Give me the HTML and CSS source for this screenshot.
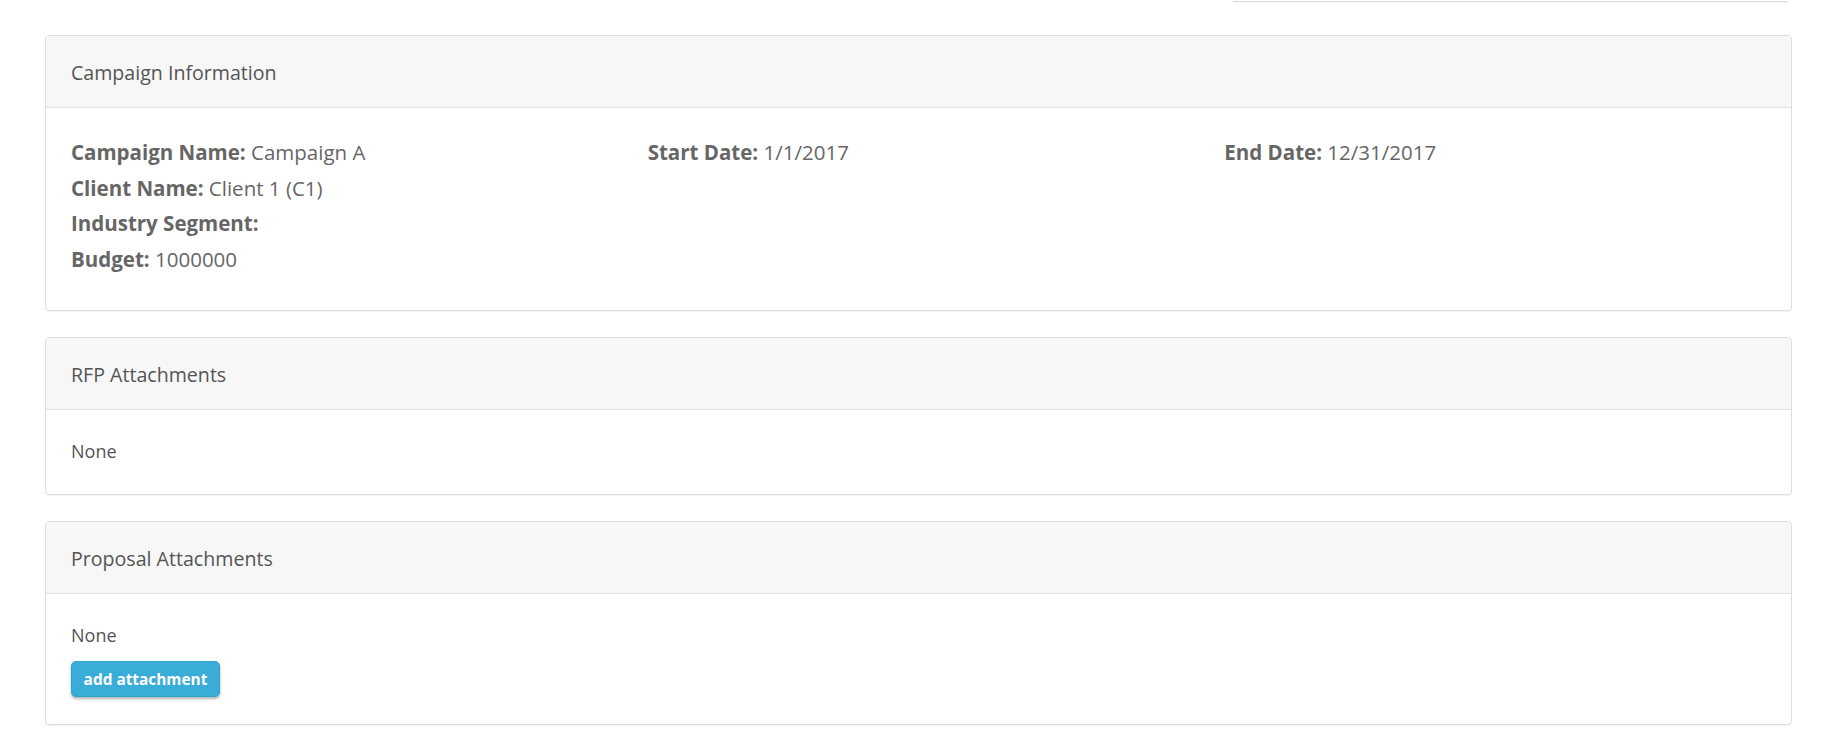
FILE: index.html
```html
<!DOCTYPE html>
<html lang="en">
<head>
<meta charset="utf-8">
<title>Campaign</title>
<link rel="stylesheet" href="styles.css">
</head>
<body>
<div class="page">
  <div class="topbar"><div class="search-stub"></div></div>

  <section class="panel">
    <div class="panel-heading">Campaign Information</div>
    <div class="panel-body info-body">
      <div class="info-grid">
        <div class="col">
          <div class="line"><b>Campaign Name:</b> Campaign A</div>
          <div class="line"><b>Client Name:</b> Client 1 (C1)</div>
          <div class="line"><b>Industry Segment:</b></div>
          <div class="line"><b>Budget:</b> 1000000</div>
        </div>
        <div class="col">
          <div class="line"><b>Start Date:</b> 1/1/2017</div>
        </div>
        <div class="col">
          <div class="line"><b>End Date:</b> 12/31/2017</div>
        </div>
      </div>
    </div>
  </section>

  <section class="panel">
    <div class="panel-heading">RFP Attachments</div>
    <div class="panel-body small-body">
      <div class="none">None</div>
    </div>
  </section>

  <section class="panel">
    <div class="panel-heading">Proposal Attachments</div>
    <div class="panel-body small-body">
      <div class="none">None</div>
      <button class="btn-info" type="button">add attachment</button>
    </div>
  </section>
</div>
</body>
</html>
```

FILE: styles.css
```css
* { box-sizing: border-box; }
html, body { margin: 0; padding: 0; background: #fff; }
body {
  font-family: "Open Sans", "Liberation Sans", sans-serif;
  color: #555;
}
.page {
  padding: 0 44px 0 45px;
}
.topbar {
  display: flex;
  justify-content: flex-end;
  height: 35px;
  padding-right: 4px;
}
.search-stub {
  width: 555px;
  height: 2px;
  border-bottom: 1px solid #dcdcdc;
  box-shadow: 0 1px 1px rgba(0,0,0,0.04);
}
.panel {
  border: 1px solid #ddd;
  border-radius: 4px;
  background: #fff;
  box-shadow: 0 1px 1px rgba(0,0,0,0.05);
  margin-bottom: 26px;
}
.panel-heading {
  height: 72px;
  display: flex;
  align-items: center;
  padding: 2px 25px 0;
  background: #f7f7f7;
  border-bottom: 1px solid #e3e3e3;
  border-radius: 3px 3px 0 0;
  font-size: 19.6px;
  color: #555;
}
.panel-body {
  padding: 26px 25px 27px;
}
.info-body {
  padding-top: 27px;
  padding-bottom: 33px;
}
.info-grid {
  display: grid;
  grid-template-columns: repeat(3, 1fr);
  column-gap: 35px;
}
.line {
  font-size: 20.5px;
  line-height: 35.5px;
  color: #666;
}
.line b { font-weight: 700; color: #666; }
.none {
  font-size: 18px;
  line-height: 31px;
  color: #555;
}
.btn-info {
  margin-top: 10px;
  display: block;
  height: 36px;
  width: 149px;
  padding: 0;
  border: 1px solid #32a3cf;
  border-radius: 5px;
  background: #39acd7;
  color: #fff;
  font-family: "Open Sans", "Liberation Sans", sans-serif;
  font-weight: 700;
  font-size: 15.4px;
  box-shadow: 0 2px 3px rgba(0,0,0,0.3);
}
```
